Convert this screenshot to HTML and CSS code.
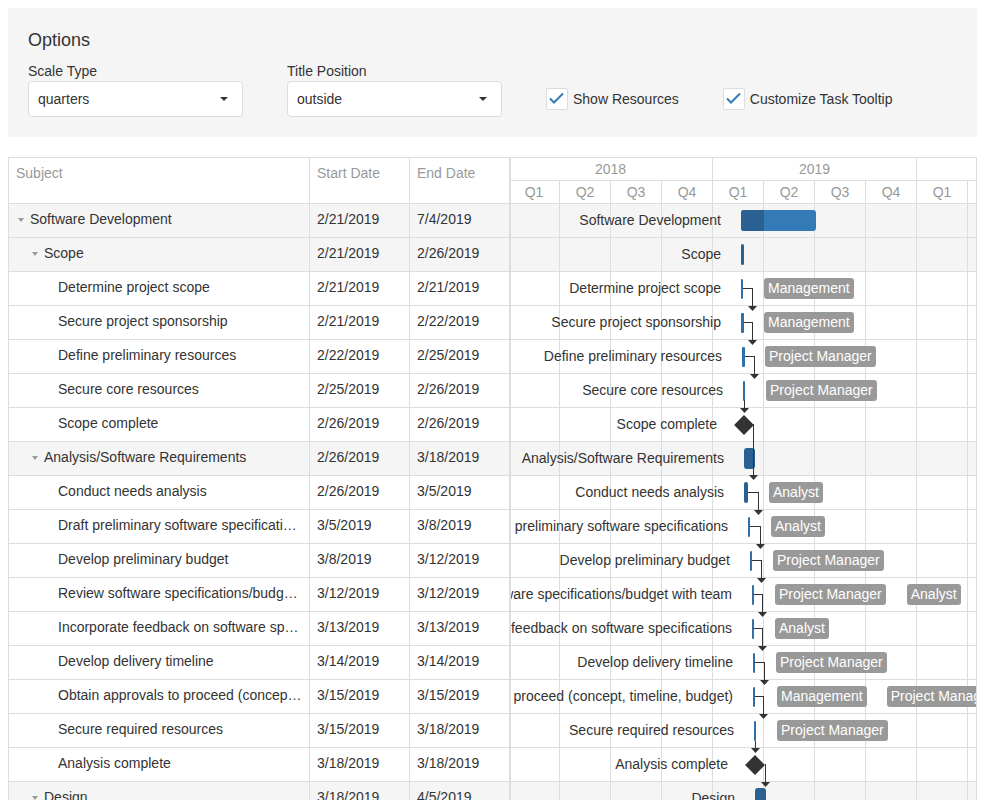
FILE: index.html
```html
<!DOCTYPE html>
<html>
<head>
<meta charset="utf-8">
<link rel="stylesheet" href="styles.css">
</head>
<body>
<div class="options">
  <h2>Options</h2>
  <div class="opt-row">
    <div class="field">
      <label>Scale Type</label>
      <div class="select"><span>quarters</span><span class="caret"></span></div>
    </div>
    <div class="field">
      <label>Title Position</label>
      <div class="select"><span>outside</span><span class="caret"></span></div>
    </div>
    <div class="check">
      <span class="box"><svg width="20" height="20" viewBox="0 0 20 20"><path d="M3 9.5 L7 13.5 L16 4.5" fill="none" stroke="#337ab7" stroke-width="2"/></svg></span>
      <span>Show Resources</span>
    </div>
    <div class="check">
      <span class="box"><svg width="20" height="20" viewBox="0 0 20 20"><path d="M3 9.5 L7 13.5 L16 4.5" fill="none" stroke="#337ab7" stroke-width="2"/></svg></span>
      <span>Customize Task Tooltip</span>
    </div>
  </div>
</div>

<div class="gantt">
  <div class="grid">
    <div class="grow ghead">
      <div class="gc subj">Subject</div>
      <div class="gc date">Start Date</div>
      <div class="gc date">End Date</div>
    </div>
    <div class="grow sum"><div class="gc subj"><span class="tog"></span>Software Development</div><div class="gc date">2/21/2019</div><div class="gc date">7/4/2019</div></div>
    <div class="grow sum"><div class="gc subj lv1"><span class="tog"></span>Scope</div><div class="gc date">2/21/2019</div><div class="gc date">2/26/2019</div></div>
    <div class="grow"><div class="gc subj lv2">Determine project scope</div><div class="gc date">2/21/2019</div><div class="gc date">2/21/2019</div></div>
    <div class="grow"><div class="gc subj lv2">Secure project sponsorship</div><div class="gc date">2/21/2019</div><div class="gc date">2/22/2019</div></div>
    <div class="grow"><div class="gc subj lv2">Define preliminary resources</div><div class="gc date">2/22/2019</div><div class="gc date">2/25/2019</div></div>
    <div class="grow"><div class="gc subj lv2">Secure core resources</div><div class="gc date">2/25/2019</div><div class="gc date">2/26/2019</div></div>
    <div class="grow"><div class="gc subj lv2">Scope complete</div><div class="gc date">2/26/2019</div><div class="gc date">2/26/2019</div></div>
    <div class="grow sum"><div class="gc subj lv1"><span class="tog"></span>Analysis/Software Requirements</div><div class="gc date">2/26/2019</div><div class="gc date">3/18/2019</div></div>
    <div class="grow"><div class="gc subj lv2">Conduct needs analysis</div><div class="gc date">2/26/2019</div><div class="gc date">3/5/2019</div></div>
    <div class="grow"><div class="gc subj lv2">Draft preliminary software specifications</div><div class="gc date">3/5/2019</div><div class="gc date">3/8/2019</div></div>
    <div class="grow"><div class="gc subj lv2">Develop preliminary budget</div><div class="gc date">3/8/2019</div><div class="gc date">3/12/2019</div></div>
    <div class="grow"><div class="gc subj lv2">Review software specifications/budget with team</div><div class="gc date">3/12/2019</div><div class="gc date">3/12/2019</div></div>
    <div class="grow"><div class="gc subj lv2">Incorporate feedback on software specifications</div><div class="gc date">3/13/2019</div><div class="gc date">3/13/2019</div></div>
    <div class="grow"><div class="gc subj lv2">Develop delivery timeline</div><div class="gc date">3/14/2019</div><div class="gc date">3/14/2019</div></div>
    <div class="grow"><div class="gc subj lv2">Obtain approvals to proceed (concept, timeline, budget)</div><div class="gc date">3/15/2019</div><div class="gc date">3/15/2019</div></div>
    <div class="grow"><div class="gc subj lv2">Secure required resources</div><div class="gc date">3/15/2019</div><div class="gc date">3/18/2019</div></div>
    <div class="grow"><div class="gc subj lv2">Analysis complete</div><div class="gc date">3/18/2019</div><div class="gc date">3/18/2019</div></div>
    <div class="grow sum"><div class="gc subj lv1"><span class="tog"></span>Design</div><div class="gc date">3/18/2019</div><div class="gc date">4/5/2019</div></div>
  </div>

  <div class="chart">
    <div class="scale years">
      <div class="yc">2018</div><div class="yc">2019</div><div class="yc">2020</div>
    </div>
    <div class="scale quarters">
      <div class="qc">Q1</div><div class="qc">Q2</div><div class="qc">Q3</div><div class="qc">Q4</div>
      <div class="qc">Q1</div><div class="qc">Q2</div><div class="qc">Q3</div><div class="qc">Q4</div>
      <div class="qc">Q1</div><div class="qc">Q2</div>
    </div>
    <div class="cbody">
      <div class="crow sum"><div class="ttl" style="width:210px">Software Development</div><div class="bar main" style="margin-left:20px;width:75px"><div class="prog" style="width:23px"></div></div></div>
      <div class="crow sum"><div class="ttl" style="width:210px">Scope</div><div class="bar dark" style="margin-left:20px;width:3px"></div></div>
      <div class="crow"><div class="ttl" style="width:210px">Determine project scope</div><div class="bar task" style="margin-left:20px;width:2px"></div><div class="res" style="margin-left:21px">Management</div></div>
      <div class="crow"><div class="ttl" style="width:210px">Secure project sponsorship</div><div class="bar task" style="margin-left:20px;width:3px"></div><div class="res" style="margin-left:20px">Management</div></div>
      <div class="crow"><div class="ttl" style="width:211px">Define preliminary resources</div><div class="bar task" style="margin-left:20px;width:3px"></div><div class="res" style="margin-left:20px">Project Manager</div></div>
      <div class="crow"><div class="ttl" style="width:212px">Secure core resources</div><div class="bar task" style="margin-left:20px;width:2px"></div><div class="res" style="margin-left:21px">Project Manager</div></div>
      <div class="crow"><div class="ttl" style="width:206px">Scope complete</div><div class="ms" style="margin-left:17px"></div></div>
      <div class="crow sum"><div class="ttl" style="width:213px">Analysis/Software Requirements</div><div class="bar dark" style="margin-left:20px;width:11px"></div></div>
      <div class="crow"><div class="ttl" style="width:213px">Conduct needs analysis</div><div class="bar dark" style="margin-left:20px;width:4px"></div><div class="res" style="margin-left:21px">Analyst</div></div>
      <div class="crow"><div class="ttl" style="width:217px">Draft preliminary software specifications</div><div class="bar task" style="margin-left:20px;width:2px"></div><div class="res" style="margin-left:21px">Analyst</div></div>
      <div class="crow"><div class="ttl" style="width:219px">Develop preliminary budget</div><div class="bar task" style="margin-left:20px;width:2px"></div><div class="res" style="margin-left:21px">Project Manager</div></div>
      <div class="crow"><div class="ttl" style="width:221px">Review software specifications/budget with team</div><div class="bar task" style="margin-left:20px;width:2px"></div><div class="res" style="margin-left:21px">Project Manager</div><div class="res" style="margin-left:21px">Analyst</div></div>
      <div class="crow"><div class="ttl" style="width:221px">Incorporate feedback on software specifications</div><div class="bar task" style="margin-left:20px;width:2px"></div><div class="res" style="margin-left:21px">Analyst</div></div>
      <div class="crow"><div class="ttl" style="width:222px">Develop delivery timeline</div><div class="bar task" style="margin-left:20px;width:2px"></div><div class="res" style="margin-left:21px">Project Manager</div></div>
      <div class="crow"><div class="ttl" style="width:222px">Obtain approvals to proceed (concept, timeline, budget)</div><div class="bar task" style="margin-left:20px;width:2px"></div><div class="res" style="margin-left:22px">Management</div><div class="res" style="margin-left:20px">Project Manager</div></div>
      <div class="crow"><div class="ttl" style="width:223px">Secure required resources</div><div class="bar task" style="margin-left:20px;width:2px"></div><div class="res" style="margin-left:21px">Project Manager</div></div>
      <div class="crow"><div class="ttl" style="width:217px">Analysis complete</div><div class="ms" style="margin-left:17px"></div></div>
      <div class="crow sum"><div class="ttl" style="width:224px">Design</div><div class="bar dark" style="margin-left:20px;width:11px"></div></div>

      <div class="conn" style="left:232px;top:84px;width:10px"></div>
      <div class="conn" style="left:233px;top:118px;width:9px"></div>
      <div class="conn" style="left:234px;top:152px;width:10px"></div>
      <div class="conn down" style="left:233px;top:196px;height:8px"></div>
      <div class="conn down" style="left:242px;top:220px;height:51px"></div>
      <div class="conn" style="left:237px;top:288px;width:11px"></div>
      <div class="conn" style="left:239px;top:322px;width:11px"></div>
      <div class="conn" style="left:241px;top:356px;width:10px"></div>
      <div class="conn" style="left:243px;top:390px;width:9px"></div>
      <div class="conn" style="left:243px;top:424px;width:9px"></div>
      <div class="conn" style="left:244px;top:458px;width:10px"></div>
      <div class="conn" style="left:244px;top:492px;width:9px"></div>
      <div class="conn down" style="left:244px;top:537px;height:7px"></div>
      <div class="conn down" style="left:254px;top:560px;height:18px"></div>
    </div>
  </div>
</div>
</body>
</html>
```

FILE: styles.css
```css
* { box-sizing: border-box; }

body {
  margin: 8px 8px 0;
  font-family: "Liberation Sans", Arial, sans-serif;
  font-size: 14px;
  color: #333;
}

/* ---------- options panel ---------- */
.options {
  background: #f5f5f5;
  padding: 20px;
  height: 129px;
}
.options h2 {
  margin: 0;
  font-size: 18px;
  font-weight: normal;
  line-height: 24px;
}
.opt-row {
  display: flex;
  align-items: flex-end;
  gap: 44px;
  margin-top: 9px;
}
.field label {
  display: block;
  line-height: 20px;
}
.select {
  width: 215px;
  height: 36px;
  border: 1px solid #ddd;
  border-radius: 4px;
  background: #fff;
  display: flex;
  align-items: center;
  justify-content: space-between;
  padding: 0 14px 0 9px;
}
.caret {
  width: 0;
  height: 0;
  border-left: 4px solid transparent;
  border-right: 4px solid transparent;
  border-top: 4px solid #333;
}
.check {
  height: 36px;
  display: flex;
  align-items: center;
  gap: 5px;
}
.box {
  width: 22px;
  height: 22px;
  border: 1px solid #ddd;
  border-radius: 2px;
  background: #fff;
  display: block;
}
.box svg { display: block; }

/* ---------- gantt ---------- */
.gantt {
  margin-top: 20px;
  height: 643px;
  border: 1px solid #ddd;
  border-bottom: 0;
  display: flex;
  overflow: hidden;
}
.grid {
  width: 501px;
  flex: none;
  overflow: hidden;
}
.grow {
  display: flex;
  height: 34px;
  border-bottom: 1px solid #ddd;
}
.grow.sum { background: #f5f5f5; }
.grow.ghead {
  height: 46px;
  background: #fff;
  color: #999;
}
.gc {
  border-right: 1px solid #ddd;
  padding: 0 7px;
  line-height: 31px;
  white-space: nowrap;
  overflow: hidden;
  text-overflow: ellipsis;
}
.ghead .gc { line-height: 20px; padding-top: 5px; }
.subj { width: 301px; }
.date { width: 100px; }
.lv1 { padding-left: 21px; }
.lv2 { padding-left: 49px; }
.tog {
  display: inline-block;
  width: 14px;
  height: 31px;
  vertical-align: top;
  position: relative;
}
.tog::before {
  content: "";
  position: absolute;
  left: 2px;
  top: 14px;
  border-left: 3px solid transparent;
  border-right: 3px solid transparent;
  border-top: 4px solid #999;
}

.chart {
  flex: 1;
  min-width: 0;
  border-left: 1px solid #ddd;
  overflow: hidden;
  position: relative;
}
.scale {
  display: flex;
  margin-left: -2px;
  height: 23px;
  border-bottom: 1px solid #ddd;
  color: #999;
  line-height: 22px;
}
.yc, .qc {
  flex: none;
  text-align: center;
  border-right: 1px solid #ddd;
}
.yc { width: 204px; }
.qc { width: 51px; }

.cbody { position: relative; }
.crow {
  height: 34px;
  border-bottom: 1px solid #ddd;
  display: flex;
  align-items: center;
  white-space: nowrap;
  background-image: linear-gradient(to right, transparent 50px, #ddd 50px);
  background-size: 51px 100%;
  background-position: -2px 0;
}
.crow.sum { background-color: #f5f5f5; }
.ttl {
  flex: none;
  display: flex;
  justify-content: flex-end;
  line-height: 18px;
  padding-bottom: 2px;
}
.bar {
  flex: none;
  height: 21px;
  border-radius: 3px;
  overflow: hidden;
}
.bar.main { background: #337ab7; }
.bar .prog { height: 100%; background: #2a6092; }
.bar.dark { background: #2b6192; }
.bar.task { background: #3070aa; border-radius: 1px; height: 20px; }
.res {
  flex: none;
  background: #999;
  color: #fff;
  border-radius: 3px;
  height: 21px;
  line-height: 21px;
  padding: 0 4px;
}
.ms {
  flex: none;
  width: 20px;
  height: 20px;
  position: relative;
}
.ms::before {
  content: "";
  position: absolute;
  left: 3px;
  top: 3px;
  width: 14px;
  height: 14px;
  background: #333;
  transform: rotate(45deg);
}

.conn {
  position: absolute;
  height: 18px;
  border-top: 1px solid #333;
  border-right: 1px solid #333;
}
.conn::after {
  content: "";
  position: absolute;
  top: 100%;
  left: calc(100% - 4px);
  width: 9px;
  height: 5px;
  background: #333;
  clip-path: polygon(0 0, 100% 0, 50% 100%);
}
.conn.down {
  border-top: 0;
  border-right: 0;
  border-left: 1px solid #333;
  width: 1px;
}
.conn.down::after { left: -5px; }
```
